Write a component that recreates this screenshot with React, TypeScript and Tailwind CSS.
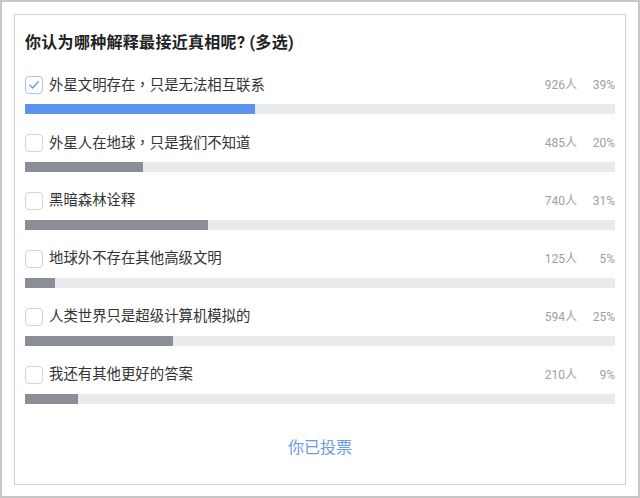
import React from 'react';

interface Option {
  label: string;
  count: number;
  percent: number;
  checked?: boolean;
}

const options: Option[] = [
  { label: '外星文明存在，只是无法相互联系', count: 926, percent: 39, checked: true },
  { label: '外星人在地球，只是我们不知道', count: 485, percent: 20 },
  { label: '黑暗森林诠释', count: 740, percent: 31 },
  { label: '地球外不存在其他高级文明', count: 125, percent: 5 },
  { label: '人类世界只是超级计算机模拟的', count: 594, percent: 25 },
  { label: '我还有其他更好的答案', count: 210, percent: 9 },
];

const Checkbox: React.FC<{ checked?: boolean }> = ({ checked }) => (
  <div
    className={`w-[18px] h-[18px] rounded-[4px] border flex items-center justify-center shrink-0 ${
      checked ? 'border-[#a8c1ee]' : 'border-[#d4d4d4]'
    }`}
  >
    {checked && (
      <svg width="12" height="12" viewBox="0 0 12 12" fill="none">
        <path d="M1.8 6.2 L4.6 9 L10.4 2.6" stroke="#5b8fe8" strokeWidth="1.2" strokeLinecap="round" strokeLinejoin="round" />
      </svg>
    )}
  </div>
);

// full-width comma drawn centred, as in the screenshot
const Label: React.FC<{ text: string }> = ({ text }) => {
  const parts = text.split('，');
  return (
    <>
      {parts.map((p, i) => (
        <React.Fragment key={i}>
          {i > 0 && <span style={{ fontFamily: '"Noto Sans CJK TC", sans-serif' }}>，</span>}
          {p}
        </React.Fragment>
      ))}
    </>
  );
};

const App: React.FC = () => {
  return (
    <div
      className="w-[640px] h-[498px] border-2 border-[#c6c6c6] bg-white px-[12px] pt-[12px] pb-[11px]"
      style={{ fontFamily: 'Roboto, "Noto Sans CJK SC", sans-serif' }}
    >
      <div className="h-full border border-[#d4d4d4] px-[10px] pt-[16px] flex flex-col">
        <h2 className="text-[16px] leading-[24px] font-bold text-[#222] tracking-[0.3px]">
          你认为哪种解释最接近真相呢? (多选)
        </h2>

        <div className="mt-[21px] flex flex-col gap-[20px]">
          {options.map((o) => (
            <div key={o.label}>
              {/* option header */}
              <div className="h-[18px] flex items-center">
                <Checkbox checked={o.checked} />
                <span className="ml-[6px] text-[14.4px] leading-[18px] text-[#333]">
                  <Label text={o.label} />
                </span>
                <span className="ml-auto text-[12px] text-[#a0a0a0]">{o.count}人</span>
                <span className="w-[38px] text-right text-[12px] text-[#a0a0a0]">{o.percent}%</span>
              </div>
              {/* bar */}
              <div className="mt-[10px] h-[10px] bg-[#e8eaee]">
                <div
                  className={`h-full ${o.checked ? 'bg-[#5a94f0]' : 'bg-[#8a8e97]'}`}
                  style={{ width: `${o.percent}%` }}
                />
              </div>
            </div>
          ))}
        </div>

        <div className="mt-[32px] text-center text-[16px] leading-[24px] text-[#6a9be8]">你已投票</div>
      </div>
    </div>
  );
};

export default App;
